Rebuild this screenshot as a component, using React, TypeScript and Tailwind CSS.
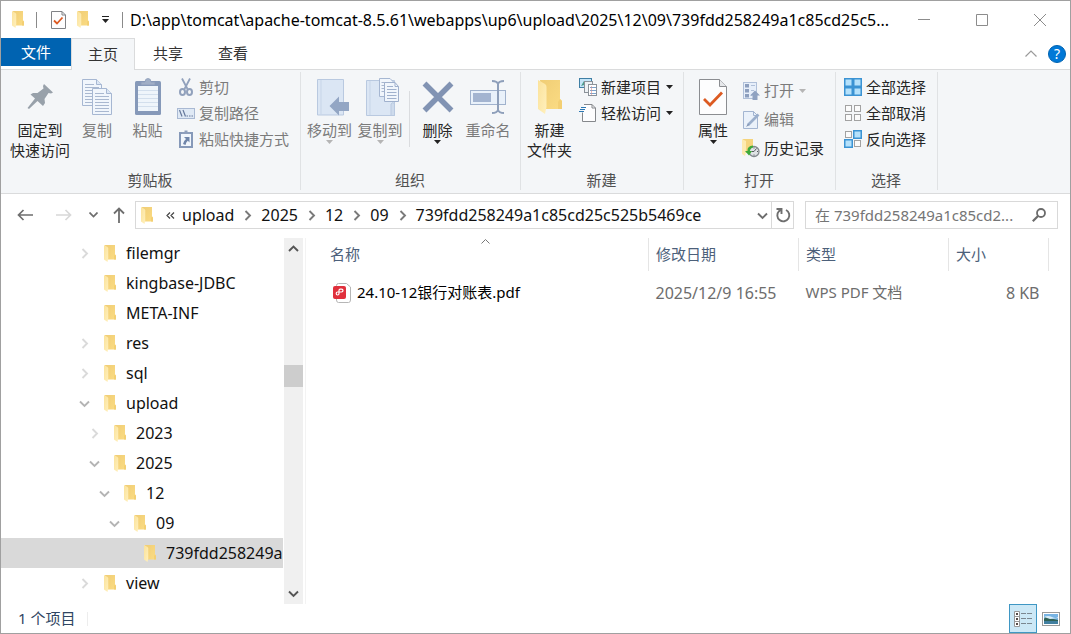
import React from 'react';

type IconProps = { className?: string };

function FolderIcon({ className = 'h-[17px] w-3' }: IconProps) {
  return (
    <svg viewBox="0 0 24 34" preserveAspectRatio="none" className={`shrink-0 ${className}`} aria-hidden="true">
      <defs>
        <linearGradient id="folderBack" x1="0" y1="0" x2="1" y2="1">
          <stop offset="0" stopColor="#f0cd75" />
          <stop offset="1" stopColor="#fbdc84" />
        </linearGradient>
        <linearGradient id="folderFront" x1="0" y1="0" x2="1" y2="1">
          <stop offset="0" stopColor="#fbe29a" />
          <stop offset="1" stopColor="#fff0bd" />
        </linearGradient>
      </defs>
      <path d="M2 0H22V19L24 21V29H5Z" fill="url(#folderBack)" />
      <path d="M20 29V22L22 19L24 21V29Z" fill="#f3cf73" />
      <path d="M0 0L7 4Q8.500 5 8.500 7V27L7 34L0 29Z" fill="url(#folderFront)" />
    </svg>
  );
}

function CheckDoc({ className = '' }: IconProps) {
  return (
    <svg viewBox="0 0 28 36" className={`shrink-0 ${className}`} fill="none" aria-hidden="true">
      <path d="M.5 .5H20.500L27.500 7.500V35.500H.5Z" fill="#fdfdfe" stroke="#8b8d91" />
      <path d="M20.500 .5V7.500H27.500" fill="#e6e8eb" stroke="#8b8d91" />
      <path d="M5 20L11 26L23 13.500" stroke="#dc5a22" strokeWidth="2.800" />
    </svg>
  );
}

function SmallCheckDoc() {
  return (
    <svg viewBox="0 0 15 18" className="h-[18px] w-[15px] shrink-0" fill="none" aria-hidden="true">
      <path d="M.5 .5H11L14.500 4V17.500H.5Z" fill="#fdfdfe" stroke="#808286" />
      <path d="M11 .5V4H14.500" stroke="#808286" />
      <path d="M3 9.500L6 12.500L11.500 6.500" stroke="#dc5a22" strokeWidth="1.800" />
    </svg>
  );
}

function Caret({ className = 'text-[#222]' }: IconProps) {
  return (
    <svg viewBox="0 0 7 4" className={`h-[4px] w-[7px] shrink-0 ${className}`} fill="currentColor" aria-hidden="true">
      <path d="M0 0H7L3.500 4Z" />
    </svg>
  );
}

function Chevron({ dir, className = '' }: IconProps & { dir: 'right' | 'down' | 'up' }) {
  const paths = { right: 'M3.500 1L8 5.500L3.500 10', down: 'M1 3.500L5.500 8L10 3.500', up: 'M1 8L5.500 3.500L10 8' };
  return (
    <svg viewBox="0 0 11 11" className={`h-[11px] w-[11px] shrink-0 ${className}`} fill="none" stroke="currentColor" strokeWidth="1.900" aria-hidden="true">
      <path d={paths[dir]} />
    </svg>
  );
}

function PinIcon() {
  return (
    <svg viewBox="0 0 27 27" className="h-[27px] w-[27px]" aria-hidden="true">
      <path d="M17 1L26 9.500L24 10.500L21.500 10L17.500 16L18 20L16 23L10.500 18L2 26L.5 25L8 15.500L3.500 11.500L6 10L10.500 10L16.500 5.500L16 3Z" fill="#98a1aa" />
    </svg>
  );
}

function Page({ x, y, lines }: { x: number; y: number; lines: number[] }) {
  return (
    <g transform={`translate(${x} ${y})`}>
      <path d="M.5 .5H14.500L19.500 5.500V26.500H.5Z" fill="#f1f6fc" stroke="#a6b7d2" />
      <path d="M14.500 .5V5.500H19.500" fill="#dce7f5" stroke="#a6b7d2" />
      {lines.map((ly) => (
        <path key={ly} d={`M3 ${ly}.5H${ly < 6 ? 12 : 17}`} stroke="#a9b8d0" />
      ))}
    </g>
  );
}

function CopyIcon() {
  return (
    <svg viewBox="0 0 30 36" className="h-9 w-[30px]" fill="none" aria-hidden="true">
      <Page x={0} y={0} lines={[5, 8, 11, 14, 17, 20, 23]} />
      <Page x={10} y={9} lines={[5, 8, 11, 14, 17, 20, 23]} />
    </svg>
  );
}

function PasteIcon() {
  return (
    <svg viewBox="0 0 26 37" className="h-[37px] w-[26px]" fill="none" aria-hidden="true">
      <rect y="3" width="26" height="34" rx="1.500" fill="#8699b9" />
      <rect x="3" y="8" width="20" height="25" fill="#eff5fb" />
      <path d="M3 12.500H23M3 16.500H23M3 20.500H23M3 24.500H23M3 28.500H23" stroke="#d3dfed" />
      <path d="M6 7V4H10Q10 .5 13 .5Q16 .5 16 4H20V7Z" fill="#a1afc7" stroke="#8d9dba" strokeWidth=".8" />
    </svg>
  );
}

function CutIcon() {
  return (
    <svg viewBox="0 0 14 18" className="h-[18px] w-[14px]" fill="none" stroke="#91a1bc" aria-hidden="true">
      <path d="M3 .5L8.500 11M11 .5L5.500 11" strokeWidth="1.800" />
      <ellipse cx="3.500" cy="14" rx="2.500" ry="3" strokeWidth="2" />
      <ellipse cx="10.500" cy="14" rx="2.500" ry="3" strokeWidth="2" />
    </svg>
  );
}

function PathIcon() {
  return (
    <svg viewBox="0 0 18 11" className="h-[11px] w-[18px]" fill="none" aria-hidden="true">
      <rect x=".5" y=".5" width="17" height="10" fill="#dfe9f5" stroke="#a9b9d3" />
      <path d="M2.500 2L5 8.500M6 2L8.500 8.500" stroke="#66799c" strokeWidth="1.200" />
      <path d="M9.500 8H11M12 8H13.500M14.500 8H16" stroke="#66799c" />
    </svg>
  );
}

function PasteShortcutIcon() {
  return (
    <svg viewBox="0 0 14 18" className="h-[18px] w-[14px]" fill="none" aria-hidden="true">
      <rect x="1" y="3" width="12" height="14" fill="#f1f6fc" stroke="#8699b9" strokeWidth="2" />
      <path d="M3 4V2H5.500V.5H8.500V2H11V4Z" fill="#8e9fbc" />
      <path d="M5 7H10.500V12.500L8.800 10.800Q7 12 6.500 15L4 14Q4.500 11 7 9Z" fill="#6f85aa" />
    </svg>
  );
}

function MoveToIcon() {
  return (
    <svg viewBox="0 0 34 38" className="h-[38px] w-[34px]" fill="none" aria-hidden="true">
      <path d="M1.500 1.500H27.500V37H1.500Z" fill="#dbe6f4" stroke="#b9c9e0" />
      <path d="M5 2V36.500" stroke="#c7d5e8" />
      <path d="M13.500 28L23 18.500V24H33V33H23V37.500Z" fill="#93a6c4" />
    </svg>
  );
}

function CopyToIcon() {
  return (
    <svg viewBox="0 0 34 38" className="h-[38px] w-[34px]" fill="none" aria-hidden="true">
      <path d="M.5 2.500H28.500V37.500H.5Z" fill="#dbe6f4" stroke="#b9c9e0" />
      <path d="M4 3V37" stroke="#c7d5e8" />
      <path d="M25 37.500V26Q27 23 28.500 26V37.500Z" fill="#cedbec" stroke="#b9c9e0" />
      <path d="M13.500 .5H24L28 4.500V18.500H13.500Z" fill="#f1f6fc" stroke="#a6b7d2" />
      <path d="M15.500 4.500H22M15.500 7.500H20M15.500 10.500H20M15.500 13.500H20" stroke="#a9b8d0" />
      <path d="M18.500 4.500H29L32.500 8.500V23.500H18.500Z" fill="#f1f6fc" stroke="#a0b1cd" />
      <path d="M29 4.500V8.500H32.500M21 8.500H27M21 11.500H30.500M21 14.500H30.500M21 17.500H30.500M21 20.500H30.500" stroke="#a0b1cd" />
    </svg>
  );
}

function DeleteIcon() {
  return (
    <svg viewBox="0 0 32 32" className="h-8 w-8" fill="none" aria-hidden="true">
      <path d="M2.500 2.500L29.500 29.500M29.500 2.500L2.500 29.500" stroke="#8193b3" strokeWidth="5.500" />
    </svg>
  );
}

function RenameIcon() {
  return (
    <svg viewBox="0 0 36 34" className="h-[34px] w-9" fill="none" aria-hidden="true">
      <rect x=".5" y="10.500" width="35" height="14" fill="#e9f1fa" stroke="#a0b2cd" />
      <rect x="3" y="13" width="18" height="9" fill="#a3b4d0" />
      <path d="M28 3V31M22 1Q27 1 28 4Q29 1 34 1M22 33Q27 33 28 30Q29 33 34 33" stroke="#8e9fba" strokeWidth="2" />
    </svg>
  );
}

function NewItemIcon() {
  return (
    <svg viewBox="0 0 18 18" className="h-[18px] w-[18px]" fill="none" aria-hidden="true">
      <rect x=".5" y=".5" width="12" height="9" fill="#c4e5f8" stroke="#3f7fa5" />
      <path d="M2 8L5 3L8 6" fill="#4c9c8b" />
      <rect x="5.500" y="3.500" width="8" height="11" fill="#eef2f5" stroke="#8b9299" />
      <rect x="9.500" y="6.500" width="8" height="11" fill="#fff" stroke="#8b9299" />
      <path d="M11 9.500H17M11 12.500H17M11 15.500H17" stroke="#7da3cb" />
      <path d="M12.500 8V17" stroke="#d98f8f" strokeWidth=".6" />
    </svg>
  );
}

function EasyAccessIcon() {
  return (
    <svg viewBox="0 0 18 18" className="h-[18px] w-[18px]" fill="none" aria-hidden="true">
      <path d="M3.500 8.500V17.500H16.500V4L13 .5H5" fill="#fdfdfe" stroke="#85888c" />
      <path d="M13 .5V4H16.500" stroke="#85888c" />
      <path d="M2 3.500H7M1 5.500H6M0 7.500H5" stroke="#2c78b4" strokeWidth="1.200" />
    </svg>
  );
}

function OpenIcon() {
  return (
    <svg viewBox="0 0 17 18" className="h-[18px] w-[17px]" fill="none" aria-hidden="true">
      <rect x=".5" y=".5" width="13" height="16" fill="#e7effa" stroke="#b0c0d9" />
      <path d="M2 2H6V5.500H2ZM2 7H6V10.500H2ZM2 12H6V15.500H2Z" fill="#8d9fbe" />
      <path d="M8 3.500H12M8 8.500H11M8 13.500H9" stroke="#b0c0d9" />
      <path d="M12 8.500L17 13.500H14.500V18H9.500V13.500H7Z" fill="#8fa2c1" />
    </svg>
  );
}

function EditIcon() {
  return (
    <svg viewBox="0 0 17 18" className="h-[18px] w-[17px]" fill="none" aria-hidden="true">
      <path d="M.5 .5H10.500L14.500 4.500V17.500H.5Z" fill="#eaf1fa" stroke="#a3b5d1" />
      <path d="M10.500 .5V4.500H14.500" stroke="#a3b5d1" />
      <path d="M15.500 3.500L5 14" stroke="#9bafcc" strokeWidth="2.600" />
      <path d="M5 12.500L6.500 14L3 16Z" fill="#8396b5" />
    </svg>
  );
}

function HistoryIcon() {
  return (
    <svg viewBox="0 0 18 19" className="h-[19px] w-[18px]" fill="none" aria-hidden="true">
      <path d="M1 0H11V14H1Z" fill="#f5d47d" />
      <path d="M0 0L4 2V13L3 17L0 15Z" fill="#fdeab0" />
      <circle cx="12" cy="12.500" r="5" fill="#dfe3e6" stroke="#83898e" strokeWidth="1.300" />
      <path d="M12 12.500L14.500 9.500M12 12.500H9.500M12 8.500V9.500M12 15.500V16.500M16 12.500H15" stroke="#565b60" />
      <path d="M11 6.500Q5 7 5.500 12H3L7 16.500L10 12H8Q8 9 11 8.500Z" fill="#3daa3a" />
    </svg>
  );
}

function SelectIcon({ mode }: { mode: 'all' | 'none' | 'invert' }) {
  const cells = [
    [0, 0],
    [9, 0],
    [0, 9],
    [9, 9],
  ];
  return (
    <svg viewBox="0 0 18 18" className="h-[18px] w-[18px]" aria-hidden="true">
      {cells.map(([x, y], i) => {
        const on = mode === 'all' || (mode === 'invert' && (i === 1 || i === 2));
        return on ? (
          <rect key={i} x={x + 0.75} y={y + 0.75} width="7.500" height="7.500" fill="#b5e1fb" stroke="#3b93d3" strokeWidth="1.500" />
        ) : (
          <rect key={i} x={x + 1.5} y={y + 1.5} width="6" height="6" fill="#fbfbfb" stroke="#a2a2a2" />
        );
      })}
    </svg>
  );
}

type BigProps = { icon: React.ReactNode; lines: string[]; width: string; enabled?: boolean; caret?: boolean };

function BigButton({ icon, lines, width, enabled, caret }: BigProps) {
  return (
    <button className={`flex shrink-0 flex-col items-center ${width} ${enabled ? 'text-[#262626]' : 'text-[#7b7b7b]'}`}>
      <span className="flex h-12 items-center pt-px">{icon}</span>
      {lines.map((l) => (
        <span key={l} className="h-5 whitespace-nowrap leading-5">
          {l}
        </span>
      ))}
      {caret && <Caret className={enabled ? 'text-[#222]' : 'text-[#b5b5b5]'} />}
    </button>
  );
}

type SmallProps = { icon: React.ReactNode; label: string; enabled?: boolean; caret?: boolean; height?: string };

function SmallButton({ icon, label, enabled, caret, height = 'h-[26px]' }: SmallProps) {
  return (
    <button className={`flex items-center whitespace-nowrap ${height} ${enabled ? 'text-[#262626]' : 'text-[#7b7b7b]'}`}>
      <span className="mr-1 flex w-[18px] justify-center">{icon}</span>
      {label}
      {caret && (
        <span className="ml-[5px]">
          <Caret className={enabled ? 'text-[#222]' : 'text-[#b5b5b5]'} />
        </span>
      )}
    </button>
  );
}

function Group({ label, width, children }: { label: string; width: string; children: React.ReactNode }) {
  return (
    <section className={`flex shrink-0 flex-col border-r border-[#e0e2e4] ${width}`}>
      <div className="flex h-[98px]">{children}</div>
      <h2 className="h-5 pr-px text-center leading-5 text-[#505050]">{label}</h2>
    </section>
  );
}

type Node = { name: string; pad: string; state?: 'open' | 'closed'; selected?: boolean };

const tree: Node[] = [
  { name: 'filemgr', pad: 'pl-[78px]', state: 'closed' },
  { name: 'kingbase-JDBC', pad: 'pl-[78px]' },
  { name: 'META-INF', pad: 'pl-[78px]' },
  { name: 'res', pad: 'pl-[78px]', state: 'closed' },
  { name: 'sql', pad: 'pl-[78px]', state: 'closed' },
  { name: 'upload', pad: 'pl-[78px]', state: 'open' },
  { name: '2023', pad: 'pl-[88px]', state: 'closed' },
  { name: '2025', pad: 'pl-[88px]', state: 'open' },
  { name: '12', pad: 'pl-[98px]', state: 'open' },
  { name: '09', pad: 'pl-[108px]', state: 'open' },
  { name: '739fdd258249a1c85cd25c525b5469ce', pad: 'pl-[118px]', selected: true },
  { name: 'view', pad: 'pl-[78px]', state: 'closed' },
];

const crumbs = ['upload', '2025', '12', '09', '739fdd258249a1c85cd25c525b5469ce'];

function TitleBar() {
  return (
    <header className="flex h-[37px] shrink-0 items-center pr-px pl-[11px]">
      <FolderIcon />
      <span className="ml-3 h-4 w-px bg-[#8a8a8a]" />
      <button aria-label="属性" className="ml-[14px]">
        <SmallCheckDoc />
      </button>
      <button aria-label="新建文件夹" className="ml-[11px]">
        <FolderIcon />
      </button>
      <button aria-label="自定义快速访问工具栏" className="ml-3 flex w-2 flex-col items-center gap-[2px]">
        <span className="h-px w-[7px] bg-[#222]" />
        <Caret />
      </button>
      <span className="ml-[13px] h-4 w-px bg-[#8a8a8a]" />
      <h1 className="ml-[7px] min-w-0 flex-1 whitespace-nowrap text-[16px] text-black">
        D:\app\tomcat\apache-tomcat-8.5.61\webapps\up6\upload\2025\12\09\739fdd258249a1c85cd25c5...
      </h1>
      {[
        ['最小化', 'M0 5.500H12'],
        ['最大化', 'M.5 .5H11.500V11.500H.5Z'],
        ['关闭', 'M0 0L12 12M12 0L0 12'],
      ].map(([name, d]) => (
        <button key={name} aria-label={name} className="flex h-full w-[58px] shrink-0 items-center justify-center">
          <svg viewBox="0 0 12 12" className="h-3 w-3" fill="none" stroke="#8c8c8c" aria-hidden="true">
            <path d={d} />
          </svg>
        </button>
      ))}
    </header>
  );
}

function Tabs() {
  return (
    <nav className="flex h-8 shrink-0 items-start border-b border-[#dadbdc] text-[#333]">
      <button className="h-7 w-[70px] bg-[#0063b1] text-white">文件</button>
      <button className="h-8 w-16 border border-b-0 border-[#dadbdc] bg-[#f4f6f8]">主页</button>
      <button className="h-[31px] w-[66px]">共享</button>
      <button className="h-[31px] w-16">查看</button>
      <div className="ml-auto flex h-[31px] items-center gap-[11px] pr-1">
        <button aria-label="最小化功能区">
          <svg viewBox="0 0 12 7" className="h-[7px] w-3" fill="none" stroke="#9a9a9a" strokeWidth="1.200" aria-hidden="true">
            <path d="M.5 6.500L6 1L11.500 6.500" />
          </svg>
        </button>
        <button aria-label="帮助" className="flex h-[18px] w-[18px] items-center justify-center rounded-full border border-[#0063b1] bg-[#0078d7] text-[14px] leading-none text-white">
          ?
        </button>
      </div>
    </nav>
  );
}

function Ribbon() {
  return (
    <div className="flex h-[124px] shrink-0 overflow-hidden border-b border-[#dadbdc] bg-[#f4f6f8] pt-[2px] pb-[3px]">
      <Group label="剪贴板" width="w-[300px]">
        <div className="flex pl-2">
          <BigButton icon={<PinIcon />} lines={['固定到', '快速访问']} width="w-[62px]" enabled />
          <BigButton icon={<CopyIcon />} lines={['复制']} width="w-[52px]" />
          <BigButton icon={<PasteIcon />} lines={['粘贴']} width="w-[49px]" />
        </div>
        <div className="flex flex-col pt-[2px] pl-[5px]">
          <SmallButton icon={<CutIcon />} label="剪切" />
          <SmallButton icon={<PathIcon />} label="复制路径" />
          <SmallButton icon={<PasteShortcutIcon />} label="粘贴快捷方式" />
        </div>
      </Group>
      <Group label="组织" width="w-[220px]">
        <div className="flex pl-[3px]">
          <BigButton icon={<span className="pl-[6px]"><MoveToIcon /></span>} lines={['移动到']} width="w-[51px]" caret />
          <BigButton icon={<span className="pl-[6px]"><CopyToIcon /></span>} lines={['复制到']} width="w-[50px]" caret />
          <span className="mt-[19px] ml-1 h-[56px] w-px bg-[#dadcdf]" />
          <BigButton icon={<DeleteIcon />} lines={['删除']} width="w-[55px]" enabled caret />
          <BigButton icon={<RenameIcon />} lines={['重命名']} width="w-[46px]" />
        </div>
      </Group>
      <Group label="新建" width="w-[163px]">
        <BigButton icon={<FolderIcon className="h-[34px] w-6" />} lines={['新建', '文件夹']} width="w-[57px]" enabled />
        <div className="flex flex-col pt-[2px] pl-px">
          <SmallButton icon={<NewItemIcon />} label="新建项目" enabled caret />
          <SmallButton icon={<EasyAccessIcon />} label="轻松访问" enabled caret />
        </div>
      </Group>
      <Group label="打开" width="w-[152px]">
        <BigButton icon={<CheckDoc className="h-9 w-7" />} lines={['属性']} width="w-[58px]" enabled caret />
        <div className="flex flex-col pt-[4px]">
          <SmallButton icon={<OpenIcon />} label="打开" caret height="h-[29px]" />
          <SmallButton icon={<EditIcon />} label="编辑" height="h-[29px]" />
          <SmallButton icon={<HistoryIcon />} label="历史记录" enabled height="h-[29px]" />
        </div>
      </Group>
      <Group label="选择" width="w-[102px]">
        <div className="flex flex-col pt-[2px] pl-2">
          <SmallButton icon={<SelectIcon mode="all" />} label="全部选择" enabled />
          <SmallButton icon={<SelectIcon mode="none" />} label="全部取消" enabled />
          <SmallButton icon={<SelectIcon mode="invert" />} label="反向选择" enabled />
        </div>
      </Group>
    </div>
  );
}

function AddressBar() {
  return (
    <div className="flex h-11 shrink-0 items-center pr-3 pb-[2px] pl-4">
      <button aria-label="返回" className="text-[#6e6e6e]">
        <svg viewBox="0 0 16 12" className="h-3 w-4" fill="none" stroke="currentColor" strokeWidth="1.700" aria-hidden="true">
          <path d="M16 6H1.500M6.500 1L1.500 6L6.500 11" />
        </svg>
      </button>
      <button aria-label="前进" className="ml-[23px] text-[#d8d8d8]">
        <svg viewBox="0 0 16 12" className="h-3 w-4" fill="none" stroke="currentColor" strokeWidth="1.700" aria-hidden="true">
          <path d="M0 6H14.500M9.500 1L14.500 6L9.500 11" />
        </svg>
      </button>
      <button aria-label="最近浏览的位置" className="ml-[17px] text-[#6e6e6e]">
        <svg viewBox="0 0 9 6" className="h-[6px] w-[9px]" fill="none" stroke="currentColor" strokeWidth="1.700" aria-hidden="true">
          <path d="M.5 .5L4.500 4.500L8.500 .5" />
        </svg>
      </button>
      <button aria-label="上移" className="ml-[15px] text-[#6e6e6e]">
        <svg viewBox="0 0 12 16" className="h-4 w-3" fill="none" stroke="currentColor" strokeWidth="1.800" aria-hidden="true">
          <path d="M6 16V1.500M1 6.500L6 1.500L11 6.500" />
        </svg>
      </button>
      <div className="ml-[10px] flex h-7 min-w-0 flex-1 items-center border border-[#d9d9d9] pl-[5px]">
        <FolderIcon />
        <span className="ml-3 flex w-[10px] shrink-0 justify-center text-[#444]">
          <svg viewBox="0 0 9 7" className="h-[7px] w-[9px]" fill="none" stroke="currentColor" strokeWidth="1.200" aria-hidden="true">
            <path d="M4 .5L1 3.500L4 6.500M8 .5L5 3.500L8 6.500" />
          </svg>
        </span>
        <ol className="ml-[7px] flex min-w-0 flex-1 items-center overflow-hidden text-[16px] leading-6 text-[#111]">
          {crumbs.map((c, i) => (
            <li key={c} className="flex shrink-0 items-center">
              {i > 0 && <Chevron dir="right" className="mx-2 text-[#7a7a7a]" />}
              <a href={`#${c}`}>{c}</a>
            </li>
          ))}
        </ol>
        <button aria-label="以前的位置" className="pr-[3px] pl-1 text-[#6e6e6e]">
          <Chevron dir="down" />
        </button>
        <button aria-label="刷新" className="flex h-full w-[22px] items-center justify-center border-l border-[#d9d9d9] text-[#6e6e6e]">
          <svg viewBox="0 0 16 16" className="h-4 w-4" fill="none" stroke="currentColor" strokeWidth="1.900" aria-hidden="true">
            <path d="M11 3A6 6 0 1 1 4 4.200L6.200 2.200M1.500 2H6.500V7" />
          </svg>
        </button>
      </div>
      <label className="ml-[11px] flex h-7 w-[253px] shrink-0 items-center border border-[#d9d9d9] pr-[11px] pl-[9px]">
        <input
          type="search"
          aria-label="搜索"
          placeholder="在 739fdd258249a1c85cd2..."
          className="min-w-0 flex-1 bg-transparent text-[15px] leading-6 outline-none placeholder:text-[#757575]"
        />
        <svg viewBox="0 0 14 14" className="h-[14px] w-[14px] shrink-0" fill="none" stroke="#6b6b6b" strokeWidth="1.800" aria-hidden="true">
          <circle cx="9" cy="5" r="4" />
          <path d="M6 8L.8 13.200" strokeWidth="2.200" />
        </svg>
      </label>
    </div>
  );
}

function Sidebar() {
  return (
    <aside className="flex w-[302px] shrink-0">
      <ul className="min-w-0 flex-1 text-[16px] text-[#111]">
        {tree.map((n) => (
          <li key={n.name} className={`flex h-[30px] items-center overflow-hidden whitespace-nowrap ${n.pad} ${n.selected ? 'bg-[#d9d9d9]' : ''}`}>
            <span className="mr-[14px] w-[11px] shrink-0">
              {n.state === 'open' && <Chevron dir="down" className="text-[#b4b4b4]" />}
              {n.state === 'closed' && <Chevron dir="right" className="text-[#dadada]" />}
            </span>
            <FolderIcon />
            <a href={`#${n.name}`} className="ml-[10px]">
              {n.name}
            </a>
          </li>
        ))}
      </ul>
      <div className="ml-px flex w-[19px] shrink-0 flex-col items-center bg-[#f0f0f0] text-[#555]">
        <button aria-label="向上滚动" className="flex h-[21px] items-center">
          <Chevron dir="up" />
        </button>
        <div className="grow-[106]" />
        <div className="h-[22px] w-full bg-[#cdcdcd]" />
        <div className="grow-[195]" />
        <button aria-label="向下滚动" className="flex h-[21px] items-center">
          <Chevron dir="down" />
        </button>
      </div>
    </aside>
  );
}

function FileList() {
  return (
    <main className="ml-[2px] min-w-0 flex-1 overflow-hidden border-l border-[#f3f3f3]">
      <table className="w-[743px] table-fixed text-left">
        <colgroup>
          <col />
          <col className="w-[150px]" />
          <col className="w-[150px]" />
          <col className="w-[100px]" />
        </colgroup>
        <thead className="text-[#4c607a]">
          <tr className="h-[33px]">
            <th className="relative border-r border-[#e5e5e5] pl-[24px] font-normal">
              名称
              <svg viewBox="0 0 9 5" className="absolute top-px left-[175px] h-[5px] w-[9px]" fill="none" stroke="#777" aria-hidden="true">
                <path d="M.5 4.500L4.500 .5L8.500 4.500" />
              </svg>
            </th>
            <th className="border-r border-[#e5e5e5] pl-[7px] font-normal">修改日期</th>
            <th className="border-r border-[#e5e5e5] pl-[7px] font-normal">类型</th>
            <th className="border-r border-[#e5e5e5] pl-[7px] font-normal">大小</th>
          </tr>
        </thead>
        <tbody>
          <tr className="h-[43px] text-[#6d6d6d]">
            <td className="pl-[27px]">
              <span className="flex items-center gap-[5px] text-black">
                <svg viewBox="0 0 19 20" className="h-5 w-[19px]" fill="none" aria-hidden="true">
                  <path d="M3.500 3V2.500Q3.500 .5 5.500 .5H13.500L17.500 4V17Q17.500 19.500 15.500 19.500H5.500Q3.500 19.500 3.500 17Z" fill="#fff" stroke="#b6b6b6" />
                  <rect y="3" width="13" height="13" rx="2" fill="#e0303c" />
                  <path d="M6 9V7.500Q6 6.200 7.300 6.200H8.500Q10 6.200 10 7.600T8.500 9H4.500Q3.200 9 3.200 10.500T4.600 12Q6 12 6 10.500V9" stroke="#fff" strokeWidth="1.200" />
                </svg>
                24.10-12银行对账表.pdf
              </span>
            </td>
            <td className="pl-[7px] text-[16px]">2025/12/9 16:55</td>
            <td className="pl-[7px]">WPS PDF 文档</td>
            <td className="pr-[9px] text-right text-[16px]">8 KB</td>
          </tr>
        </tbody>
      </table>
    </main>
  );
}

function StatusBar() {
  return (
    <footer className="flex h-[29px] shrink-0 items-center pl-[17px] text-[#2f4562]">
      <span>1 个项目</span>
      <span className="ml-3 h-[14px] w-px bg-[#ededed]" />
      <div className="ml-auto flex items-center pr-[5px]">
        <button aria-label="详细信息" className="flex h-[29px] w-7 items-center justify-center border border-[#3f97c4] bg-[#cce8f6]">
          <svg viewBox="0 0 18 16" className="h-4 w-[18px]" fill="none" aria-hidden="true">
            <path d="M.5 .5H5.500V15.500H.5ZM.5 5.500H5.500M.5 10.500H5.500" fill="#fff" stroke="#999" />
            <path d="M2 3H4M2 8H4M2 13H4" stroke="#554a45" strokeWidth="2" />
            <path d="M7 2.500H12M13 2.500H18M7 7.500H12M13 7.500H18M7 12.500H12M13 12.500H18" stroke="#7b8790" />
          </svg>
        </button>
        <button aria-label="大缩略图" className="flex h-[29px] w-7 items-center justify-center">
          <svg viewBox="0 0 18 14" className="h-[14px] w-[18px]" fill="none" aria-hidden="true">
            <rect x=".5" y=".5" width="17" height="13" fill="#fff" stroke="#999" />
            <rect x="2" y="2" width="14" height="10" fill="#78b4e4" />
            <path d="M2 7Q4 3 7 6L16 8V9H2Z" fill="#2f6155" />
            <path d="M2 5Q6 3 10 5T16 5V6L8 7Z" fill="#d9edf8" />
            <path d="M2 9H16V12H2Z" fill="#417fa0" />
          </svg>
        </button>
      </div>
    </footer>
  );
}

export default function App() {
  return (
    <div className="flex min-h-screen flex-col border border-[#a0a0a0] bg-white font-['Noto_Sans','Noto_Sans_CJK_SC',sans-serif] text-[15px]">
      <TitleBar />
      <Tabs />
      <Ribbon />
      <AddressBar />
      <div className="flex flex-1">
        <Sidebar />
        <FileList />
      </div>
      <StatusBar />
    </div>
  );
}
